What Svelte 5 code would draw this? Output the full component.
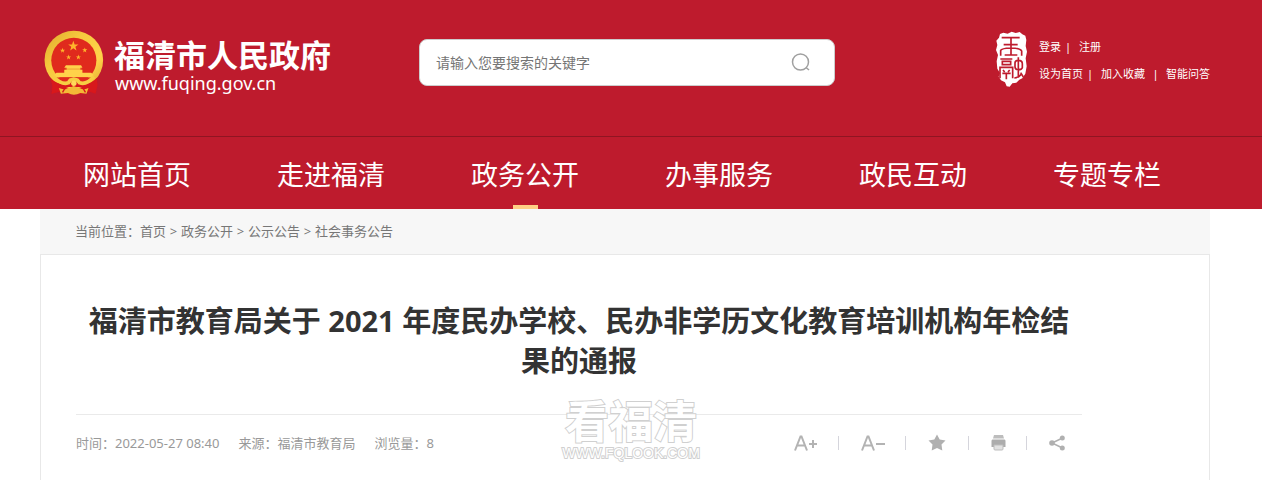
<script>
  const nav = ['网站首页', '走进福清', '政务公开', '办事服务', '政民互动', '专题专栏'];
  const active = '政务公开';
  const crumbs = ['首页', '政务公开', '公示公告', '社会事务公告'];
  const stars = [
    [107, 63, 16],
    [75, 76, 8],
    [141, 75, 8],
    [93, 96, 8],
    [122, 96, 8]
  ];

  function star(cx, cy, r) {
    return Array.from({ length: 10 }, (_, i) => {
      const radius = i % 2 ? r * 0.4 : r;
      const angle = (i * Math.PI) / 5 - Math.PI / 2;
      return `${(cx + radius * Math.cos(angle)).toFixed(1)},${(cy + radius * Math.sin(angle)).toFixed(1)}`;
    }).join(' ');
  }
</script>

<header>
  <div class="wrap masthead">
    <a class="brand" href="#home">
      <svg class="emblem" viewBox="20 15 178 196" aria-hidden="true">
        <defs>
          <linearGradient id="gold" x1="0" y1="0" x2="1" y2="1">
            <stop offset="0" stop-color="#dfa92c" />
            <stop offset=".35" stop-color="#f6c93e" />
            <stop offset=".7" stop-color="#ffd34a" />
            <stop offset="1" stop-color="#dda52a" />
          </linearGradient>
        </defs>
        <path d="M40 160 L66 176 H150 L176 160 L179 178 L173 204 L154 198 L130 205 H86 L64 199 L42 204 L46 184Z" fill="#d8181c" />
        <circle cx="108.500" cy="104" r="87" fill="url(#gold)" />
        <circle cx="108.500" cy="105" r="67" fill="#e02a1d" />
        {#each stars as [x, y, r]}
          <polygon points={star(x, y, r)} fill="#ffb52c" />
        {/each}
        <path d="M85 120 H130 L134 127 H128 V133 H134 V142 H160 L166 147 V155 H51 V147 L57 142 H80 V133 H87 V127 H80Z" fill="#ffd24a" />
        <path d="M82 131 H133" stroke="#e8872a" stroke-width="2" />
        <path d="M52 156 H165 L150 171 H67Z" fill="#e02a1d" />
        <path d="M40 158 Q56 174 80 176 L94 171 L100 163 H118 L124 171 L138 176 Q162 174 177 157 L178 176 L171 203 L150 193 L124 184 H94 L68 193 L43 204 L45 182Z" fill="#d8181c" />
        <path d="M48 154 Q72 179 92 172 L98 164 L108 161 L119 164 L126 172 Q146 179 168 154" fill="none" stroke="#f7cd43" stroke-width="11" />
        <path d="M64 187 Q86 195 98 186 L108 181 L119 186 Q134 195 152 187 L146 204 L128 202 Q108 212 91 202 L70 204Z" fill="#f3b937" />
        <circle cx="108.500" cy="173" r="8" fill="#ffd95a" />
        <path d="M83 186 L75 200 M135 186 L143 200" stroke="#d8181c" stroke-width="4" />
      </svg>
      <span class="names">
        <strong>福清市人民政府</strong>
        <span>www.fuqing.gov.cn</span>
      </span>
    </a>

    <form class="search" onsubmit={(e) => e.preventDefault()}>
      <input type="text" aria-label="请输入您要搜索的关键字" placeholder="请输入您要搜索的关键字" />
      <button type="submit" aria-label="搜索">
        <svg width="20" height="20" viewBox="0 0 20 20" fill="none" stroke="#a0a0a0" stroke-width="1.500">
          <circle cx="9.500" cy="9" r="8" />
          <path d="M15 14.500 L18 17" />
        </svg>
      </button>
    </form>

    <div class="tools">
      <svg class="seal" width="34" height="56" viewBox="0 0 102 168" aria-hidden="true">
        <path d="M25 5 L38 8 L50 2 L62 6 L74 3 L82 10 L91 14 L94 27 L92 45 L96 62 L92 82 L95 106 L91 128 L82 142 L73 146 L64 155 L52 157 L44 167 L35 166 L30 154 L18 148 L11 137 L15 126 L7 113 L5 91 L9 72 L3 57 L7 42 L4 29 L12 20 L15 9Z" fill="#fff" />
        <g fill="none" stroke="#be1b2d" stroke-width="5">
          <path d="M20 20 H74 M26 41 H68 M48 20 V72 M17 74 V58 Q20 52 46 51 M50 51 Q76 52 80 60 V74 M29 72 H67" />
          <path d="M16 84 H52 M22 91 H47 V101 H22Z M15 142 V109 H53 V142 M24 117 L29 123 M44 117 L39 123 M22 127 H47 M34 127 V145" />
          <path d="M60 96 Q60 88 70 88 Q82 88 82 98 V110 Q80 116 70 116 Q60 116 60 107Z M70 79 V140 M58 141 Q72 140 80 128 M77 125 L85 138" />
        </g>
      </svg>
      <div class="links">
        <p><a href="#login">登录</a><i>|</i><a href="#register">注册</a></p>
        <p><a href="#sethome">设为首页</a><i>|</i><a href="#favorite">加入收藏</a><i class="wide">|</i><a href="#ask">智能问答</a></p>
      </div>
    </div>
  </div>

  <nav>
    <ul class="wrap">
      {#each nav as item}
        <li><a href="#nav" class:active={item === active}>{item}</a></li>
      {/each}
    </ul>
  </nav>
</header>

<main class="wrap">
  <div class="crumbs">
    <span>当前位置：</span>
    {#each crumbs as crumb, i}
      {#if i}<b>&gt;</b>{/if}<a href="#crumb">{crumb}</a>
    {/each}
  </div>

  <article>
    <h1>福清市教育局关于 2021 年度民办学校、民办非学历文化教育培训机构年检结果的通报</h1>
    <div class="info">
      <div class="meta">
        <span>时间：2022-05-27 08:40</span>
        <span>来源：福清市教育局</span>
        <span>浏览量：8</span>
      </div>
      <div class="actions">
        <button aria-label="放大字号">
          <svg width="24" height="16" viewBox="0 0 24 16" fill="none" stroke="#b3b3b3" stroke-width="2">
            <path d="M1 15.500 L6.500 1.500 H7.500 L13 15.500 M3 10.500 H11 M15 9 H23 M19 5 V13" />
          </svg>
        </button>
        <button aria-label="缩小字号">
          <svg width="24" height="16" viewBox="0 0 24 16" fill="none" stroke="#b3b3b3" stroke-width="2">
            <path d="M1 15.500 L6.500 1.500 H7.500 L13 15.500 M3 10.500 H11 M15 9 H24" />
          </svg>
        </button>
        <button aria-label="收藏">
          <svg width="20" height="17" viewBox="0 0 20 17" fill="#b0b0b0">
            <path d="M9 .5 L11.700 5.500 L17.500 6.500 L13.500 10.500 L14.300 16.500 L9 14 L3.700 16.500 L4.500 10.500 L.5 6.500 L6.300 5.500Z" />
          </svg>
        </button>
        <button aria-label="打印">
          <svg width="15" height="16" viewBox="0 0 15 16">
            <path d="M3 0 H12 L13 3.500 H2Z" fill="#bdbdbd" />
            <path d="M1.500 4.500 H13.500 Q14.500 4.500 14.500 6 V12 H.5 V6 Q.5 4.500 1.500 4.500Z" fill="#adadad" />
            <path d="M3 10 H12 V14 Q12 15 11 15 H4 Q3 15 3 14Z" fill="#e2e2e2" stroke="#bdbdbd" />
          </svg>
        </button>
        <button aria-label="分享">
          <svg width="16" height="16" viewBox="0 0 16 16" fill="#b0b0b0">
            <path d="M13.500 3 L3 8 L13.500 13" fill="none" stroke="#b0b0b0" stroke-width="1.500" />
            <circle cx="3" cy="8" r="2.800" />
            <circle cx="13.300" cy="3" r="2.500" />
            <circle cx="13.300" cy="13" r="2.500" />
          </svg>
        </button>
      </div>
      <div class="mark">
        <strong>看福清</strong>
        <span>WWW.FQLOOK.COM</span>
      </div>
    </div>
  </article>
</main>

<style>
  :global(body) {
    margin: 0;
    background: #fff;
    font-family: 'Noto Sans', 'Noto Sans CJK SC', sans-serif;
  }
  a {
    color: inherit;
    text-decoration: none;
  }
  button {
    display: flex;
    padding: 0;
    border: 0;
    background: none;
    cursor: pointer;
  }
  .wrap {
    margin: 0 52px 0 40px;
  }
  header {
    background: #be1b2d;
    color: #fff;
  }
  .masthead {
    display: flex;
    height: 136px;
    align-items: flex-start;
  }
  .brand {
    display: flex;
    flex: 0 0 379px;
    gap: 10px;
    padding: 30px 0 0 4px;
    box-sizing: border-box;
  }
  .emblem {
    width: 60px;
    height: 66px;
  }
  .names {
    display: flex;
    flex-direction: column;
    padding-top: 7px;
    white-space: nowrap;
  }
  .names strong {
    font-size: 31px;
    line-height: 36px;
  }
  .names span {
    padding-left: 1px;
    font-size: 18px;
    line-height: 20px;
  }
  .search {
    display: flex;
    flex: 0 1 416px;
    height: 47px;
    margin-top: 39px;
    box-sizing: border-box;
    align-items: center;
    padding: 0 23px 0 16px;
    border: 1px solid #ccc;
    border-radius: 8px;
    background: #fff;
  }
  .search input {
    flex: 1;
    min-width: 0;
    padding: 0;
    border: 0;
    outline: 0;
    background: none;
    color: #666;
    font: 14px/20px 'Noto Sans', 'Noto Sans CJK SC', sans-serif;
  }
  .search input::placeholder {
    color: #757575;
  }
  .tools {
    display: flex;
    gap: 10px;
    margin: 31px 0 0 auto;
    white-space: nowrap;
  }
  .links {
    padding-top: 2px;
    font-size: 11px;
    line-height: 27px;
  }
  .links p {
    margin: 0;
  }
  .links i {
    display: inline-block;
    width: 18px;
    padding-right: 4px;
    box-sizing: border-box;
    font-style: normal;
    text-align: center;
  }
  .links .wide {
    width: 21px;
    padding-right: 0;
  }
  nav {
    border-top: 1px solid #8f1522;
  }
  nav ul {
    display: grid;
    grid-template-columns: repeat(6, 1fr);
    padding: 0 6px 0 0;
    list-style: none;
  }
  nav a {
    display: flex;
    height: 72px;
    flex-direction: column;
    align-items: center;
    font-size: 27px;
    line-height: 76px;
    white-space: nowrap;
    position: relative;
  }
  nav a.active::after {
    content: '';
    position: absolute;
    bottom: 0;
    width: 25px;
    height: 4px;
    background: #ffcf85;
  }
  .crumbs {
    display: flex;
    height: 45px;
    box-sizing: border-box;
    align-items: center;
    padding: 0 0 2px 35px;
    background: #f7f7f7;
    color: #777;
    font-size: 13px;
    line-height: 20px;
    white-space: nowrap;
  }
  .crumbs b {
    width: 15px;
    font-weight: 400;
    text-align: center;
  }
  article {
    min-height: 226px;
    box-sizing: border-box;
    padding: 46px 127px 0 35px;
    border: 1px solid #e8e8e8;
    border-bottom: 0;
  }
  h1 {
    margin: 0 0 33px;
    color: #333;
    font-size: 29px;
    line-height: 40px;
    text-align: center;
  }
  .info {
    display: flex;
    position: relative;
    justify-content: space-between;
    align-items: center;
    height: 55px;
    border-top: 1px solid #eaeaea;
    color: #999;
    font-size: 13px;
    line-height: 20px;
  }
  .meta {
    display: flex;
    gap: 19px;
    white-space: nowrap;
  }
  .actions {
    display: flex;
    padding-right: 17px;
  }
  .actions button {
    align-items: center;
    height: 16px;
  }
  .actions button + button::before {
    content: '';
    width: 1px;
    height: 14px;
    margin: 0 22px 0 20px;
    background: #d5d5dc;
  }
  .mark {
    position: absolute;
    top: -18px;
    left: 50%;
    display: flex;
    width: 138px;
    margin-left: -17px;
    flex-direction: column;
    align-items: center;
    color: #fff;
    -webkit-text-stroke: 2px #d0d0d0;
    paint-order: stroke fill;
    pointer-events: none;
    white-space: nowrap;
  }
  .mark strong {
    font-size: 44px;
    line-height: 48px;
  }
  .mark span {
    font-family: 'Liberation Sans', sans-serif;
    font-size: 14px;
    line-height: 16px;
  }
</style>
